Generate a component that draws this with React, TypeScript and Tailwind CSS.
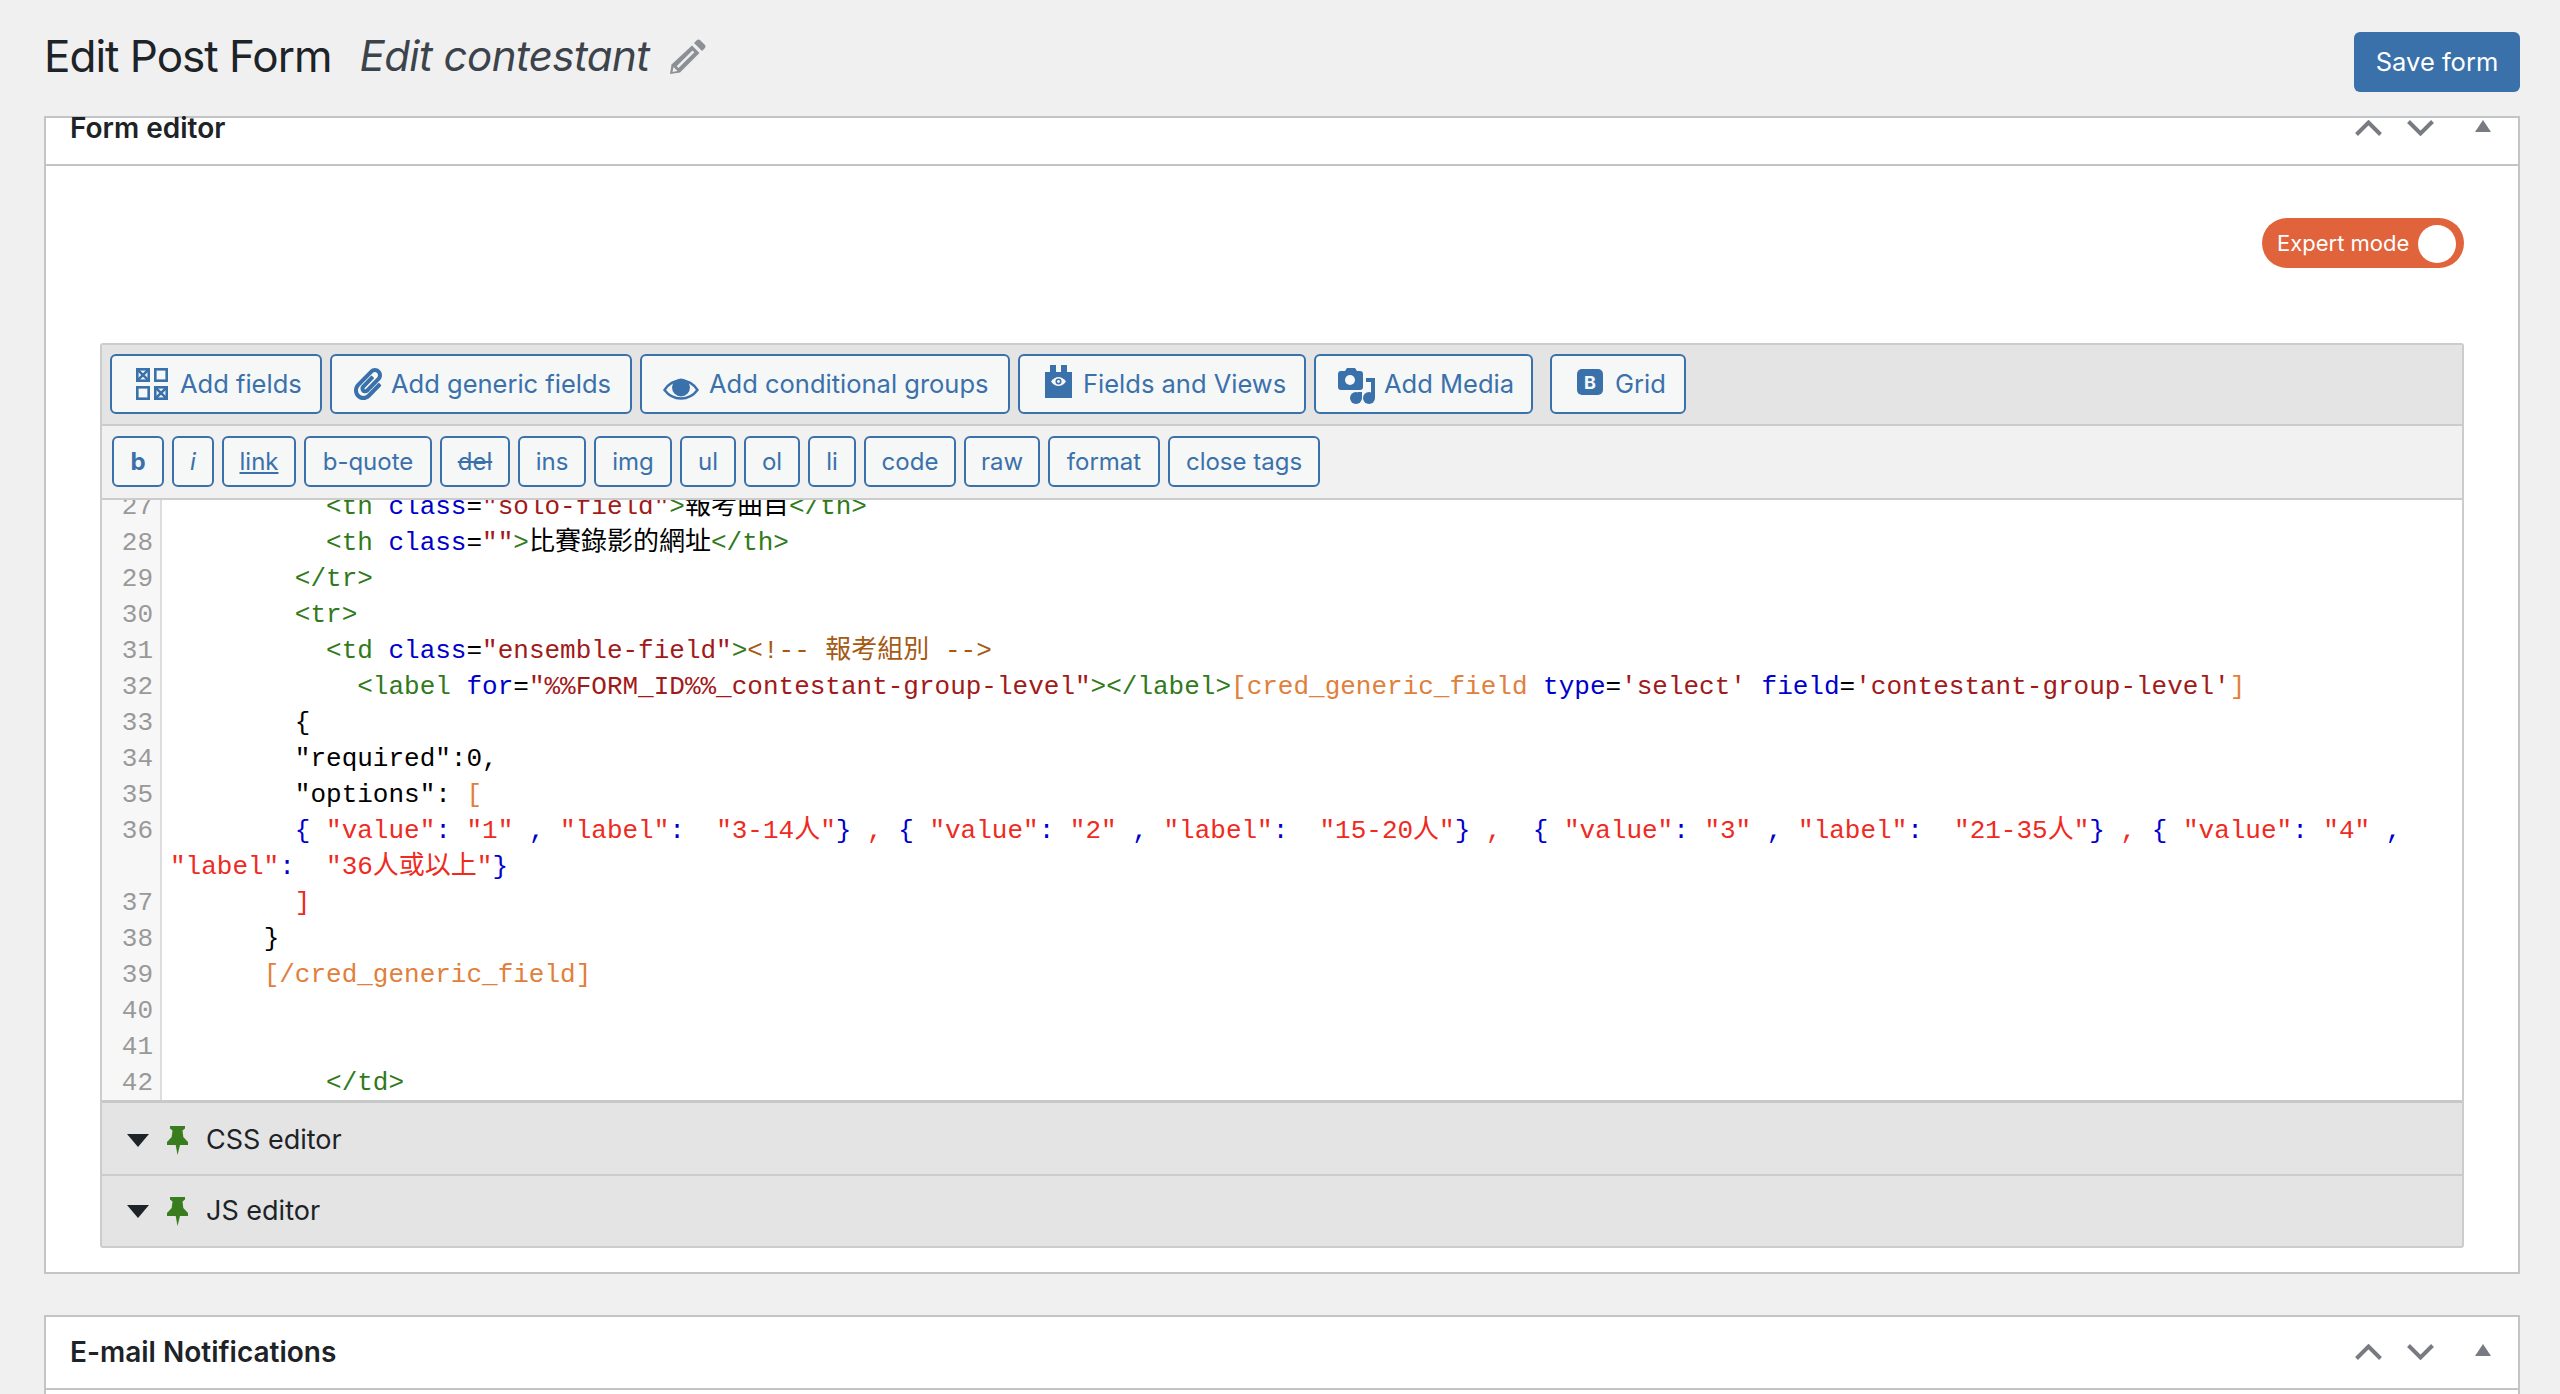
import type { ReactNode } from "react";
import { FaPaperclip } from "react-icons/fa";

const sans = "font-['Inter',sans-serif]";
const mono = "font-['Liberation_Mono','Noto_Sans_CJK_TC',monospace]";

// codemirror token colours
const tag = "text-[#317a1c]";
const attr = "text-[#0000cc]";
const str = "text-[#a11a1a]";
const eq = "text-black";
const cmt = "text-[#a55a14]";
const sc = "text-[#e0803c]";
const err = "text-[#ee2a22]";

type Part = [string, string];
type Line = { n?: number; parts: Part[] };

const sp = (count: number): Part => [eq, " ".repeat(count)];

const lines: Line[] = [
  {
    n: 27,
    parts: [sp(10), [tag, "<th"], [attr, " class"], [eq, "="], [str, '"solo-field"'], [tag, ">"], [eq, "報考曲目"], [tag, "</th>"]],
  },
  {
    n: 28,
    parts: [sp(10), [tag, "<th"], [attr, " class"], [eq, "="], [str, '""'], [tag, ">"], [eq, "比賽錄影的網址"], [tag, "</th>"]],
  },
  { n: 29, parts: [sp(8), [tag, "</tr>"]] },
  { n: 30, parts: [sp(8), [tag, "<tr>"]] },
  {
    n: 31,
    parts: [sp(10), [tag, "<td"], [attr, " class"], [eq, "="], [str, '"ensemble-field"'], [tag, ">"], [cmt, "<!-- 報考組別 -->"]],
  },
  {
    n: 32,
    parts: [
      sp(12),
      [tag, "<label"],
      [attr, " for"],
      [eq, "="],
      [str, '"%%FORM_ID%%_contestant-group-level"'],
      [tag, "></label>"],
      [sc, "[cred_generic_field"],
      [attr, " type"],
      [eq, "="],
      [str, "'select'"],
      [attr, " field"],
      [eq, "="],
      [str, "'contestant-group-level'"],
      [sc, "]"],
    ],
  },
  { n: 33, parts: [sp(8), [eq, "{"]] },
  { n: 34, parts: [sp(8), [eq, '"required":0,']] },
  { n: 35, parts: [sp(8), [eq, '"options": '], [sc, "["]] },
  {
    n: 36,
    parts: [
      sp(8),
      [attr, "{ "],
      [err, '"value"'],
      [attr, ": "],
      [err, '"1"'],
      [attr, " , "],
      [err, '"label"'],
      [attr, ":  "],
      [err, '"3-14人"'],
      [attr, "}"],
      [err, " , "],
      [attr, "{ "],
      [err, '"value"'],
      [attr, ": "],
      [err, '"2"'],
      [attr, " , "],
      [err, '"label"'],
      [attr, ":  "],
      [err, '"15-20人"'],
      [attr, "}"],
      [err, " ,  "],
      [attr, "{ "],
      [err, '"value"'],
      [attr, ": "],
      [err, '"3"'],
      [attr, " , "],
      [err, '"label"'],
      [attr, ":  "],
      [err, '"21-35人"'],
      [attr, "}"],
      [err, " , "],
      [attr, "{ "],
      [err, '"value"'],
      [attr, ": "],
      [err, '"4"'],
      [attr, " ,"],
    ],
  },
  { parts: [[err, '"label"'], [attr, ":  "], [err, '"36人或以上"'], [attr, "}"]] },
  { n: 37, parts: [sp(8), [err, "]"]] },
  { n: 38, parts: [sp(6), [eq, "}"]] },
  { n: 39, parts: [sp(6), [sc, "[/cred_generic_field]"]] },
  { n: 40, parts: [] },
  { n: 41, parts: [] },
  { n: 42, parts: [sp(10), [tag, "</td>"]] },
];

const formatButtons = [
  { label: "b", w: "w-[52px]", extra: "font-bold" },
  { label: "i", w: "w-[42px]", extra: "italic" },
  { label: "link", w: "w-[74px]", extra: "underline" },
  { label: "b-quote", w: "w-[128px]", extra: "" },
  { label: "del", w: "w-[70px]", extra: "line-through" },
  { label: "ins", w: "w-[68px]", extra: "" },
  { label: "img", w: "w-[78px]", extra: "" },
  { label: "ul", w: "w-[56px]", extra: "" },
  { label: "ol", w: "w-[56px]", extra: "" },
  { label: "li", w: "w-[48px]", extra: "" },
  { label: "code", w: "w-[92px]", extra: "" },
  { label: "raw", w: "w-[76px]", extra: "" },
  { label: "format", w: "w-[112px]", extra: "" },
  { label: "close tags", w: "w-[152px]", extra: "" },
];

function FieldsIcon() {
  return (
    <svg width="32" height="32" viewBox="0 0 32 32" fill="none" stroke="currentColor" strokeWidth="2.6">
      <rect x="1.3" y="1.3" width="11.4" height="11.4" />
      <path d="M1.3 1.3l11.4 11.4M12.7 1.3L1.3 12.7" />
      <rect x="19.3" y="1.3" width="11.4" height="11.4" />
      <rect x="1.3" y="19.3" width="11.4" height="11.4" />
      <rect x="19.3" y="19.3" width="11.4" height="11.4" />
      <path d="M19.3 19.3l11.4 11.4M30.7 19.3L19.3 30.7" />
    </svg>
  );
}

function EyeIcon() {
  return (
    <svg width="36" height="22" viewBox="0 0 36 22">
      <path d="M1.5 12C6 5 12 2.5 18 2.5S30 5 34.5 12C30 18 24 20.5 18 20.5S6 18 1.5 12z" fill="none" stroke="currentColor" strokeWidth="2.4" />
      <circle cx="18" cy="9.5" r="9" fill="currentColor" />
    </svg>
  );
}

function ViewsIcon() {
  return (
    <svg width="27" height="33" viewBox="0 0 27 33">
      <path d="M0 7h5V0h6v7h5V0h6v7h5v26H0z" fill="currentColor" />
      <path d="M6 16.500C8 13.500 11 12 13.500 12S19 13.500 21 16.500C19 19.500 16 21 13.500 21S8 19.500 6 16.500z" fill="#f6f7f7" />
      <circle cx="13.500" cy="16.500" r="3" fill="currentColor" />
      <circle cx="13.500" cy="16.500" r="1.400" fill="#f6f7f7" />
    </svg>
  );
}

function MediaIcon() {
  return (
    <svg width="37" height="36" viewBox="0 0 37 36">
      <path d="M3 3h4l2-3h8l2 3h3a3 3 0 0 1 3 3v13a3 3 0 0 1-3 3H3a3 3 0 0 1-3-3V6a3 3 0 0 1 3-3z" fill="currentColor" />
      <circle cx="12" cy="12" r="5" fill="#f6f7f7" />
      <path d="M28 10h9v20h-4V14h-5z" fill="currentColor" />
      <circle cx="31" cy="30" r="6" fill="currentColor" />
      <path d="M20 24h4v6h-4z" fill="currentColor" />
      <circle cx="18" cy="30" r="6" fill="currentColor" />
    </svg>
  );
}

function PencilIcon() {
  return (
    <svg width="36" height="35" viewBox="0 0 36 35" className="text-[#8c8f94]">
      <path d="M26.500 1.500a2.800 2.800 0 0 1 4 0l4 4a2.800 2.800 0 0 1 0 4l-2.500 2.500-8-8z" fill="currentColor" />
      <path d="M22 6.500l7.500 7.500L10 33.500 0 35l1.500-9.500z" fill="currentColor" />
      <path d="M22.500 11.500l1.800 1.800L8.500 29l-1.800-1.800z" fill="#f0f0f1" />
      <path d="M3.500 28l4 4-5 1z" fill="#f0f0f1" />
    </svg>
  );
}

function PinIcon() {
  return (
    <svg width="21" height="29" viewBox="0 0 21 29" className="shrink-0 text-[#3a7d1e]">
      <path d="M3 0h15v2.500l-2.500 2 .8 6.500 4.700 5v3h-8L10.500 29 8.700 19H0v-3l4.700-5 .8-6.500-2.500-2z" fill="currentColor" />
    </svg>
  );
}

function Caret() {
  return (
    <svg width="22" height="13" viewBox="0 0 22 13" className="shrink-0 text-[#1d2327]">
      <path d="M0 0h22L11 13z" fill="currentColor" />
    </svg>
  );
}

function HandleIcons() {
  return (
    <div className="flex items-center text-[#787c82]">
      <svg width="27" height="16" viewBox="0 0 27 16" fill="none" stroke="currentColor" strokeWidth="4">
        <path d="M1.500 14.500l12-12 12 12" />
      </svg>
      <svg width="27" height="16" viewBox="0 0 27 16" fill="none" stroke="currentColor" strokeWidth="4" className="ml-[25px]">
        <path d="M1.500 1.500l12 12 12-12" />
      </svg>
      <svg width="16" height="12" viewBox="0 0 16 12" className="ml-[41px] mr-[27px] -translate-y-[2px]">
        <path d="M8 0l8 12H0z" fill="currentColor" />
      </svg>
    </div>
  );
}

function ToolButton({ w, pl, children }: { w: string; pl: string; children: ReactNode }) {
  return (
    <button className={`flex h-[60px] items-center rounded-[6px] border-2 border-[#3a71ab] bg-[#f6f7f7] text-[25.5px] whitespace-nowrap text-[#3a71ab] ${w} ${pl}`}>
      {children}
    </button>
  );
}

function SubEditor({ title, box }: { title: string; box: string }) {
  return (
    <div className={`flex items-center bg-[#e4e4e4] pl-[25px] text-[27px] text-[#1d2327] ${box}`}>
      <Caret />
      <span className="ml-[18px]">
        <PinIcon />
      </span>
      <span className="ml-[18px]">{title}</span>
    </div>
  );
}

export default function App() {
  return (
    <div className={`h-[1394px] overflow-hidden bg-[#f0f0f1] pr-[40px] pl-[44px] ${sans}`}>
      <div className="flex h-[116px] items-start justify-between">
        <div className="flex items-center pt-[29px]">
          <h1 className="text-[44px] leading-[54px] tracking-[-1px] text-[#1d2327]">Edit Post Form</h1>
          <span className="ml-[28px] text-[42px] leading-[54px] tracking-[-0.55px] text-[#3c434a] italic">Edit contestant</span>
          <span className="ml-[20px]">
            <PencilIcon />
          </span>
        </div>
        <button className="mt-[32px] h-[60px] w-[166px] rounded-[6px] bg-[#3a71ab] text-[25.5px] text-white">Save form</button>
      </div>

      <div className="border-2 border-[#c3c4c7] bg-white">
        <div className="flex h-[46px] items-start justify-between pt-[1px] pl-[24px]">
          <h2 className="text-[28px] leading-[18px] font-semibold text-[#1d2327]">Form editor</h2>
          <div className="pt-[1px]">
            <HandleIcons />
          </div>
        </div>
        <div className="border-t-2 border-[#c3c4c7] px-[54px] pb-[24px]">
          <div className="flex justify-end pt-[52px] pb-[75px]">
            <div className="flex h-[50px] w-[202px] items-center rounded-full bg-[#e0633b] pt-[1px] pl-[15px] text-[22px] whitespace-nowrap text-white">
              Expert mode
              <span className="mr-[8px] ml-auto h-[38px] w-[38px] rounded-full bg-white" />
            </div>
          </div>

          <div className="rounded-[3px] border-2 border-[#cccccc]">
            <div className="flex gap-2 border-b-2 border-[#cccccc] bg-[#e4e4e4] px-[8px] pt-[9px] pb-[10px]">
              <ToolButton w="w-[212px]" pl="pl-[24px]">
                <FieldsIcon />
                <span className="ml-[12px]">Add fields</span>
              </ToolButton>
              <ToolButton w="w-[302px]" pl="pl-[20px]">
                <FaPaperclip size={32} />
                <span className="ml-[7px]">Add generic fields</span>
              </ToolButton>
              <ToolButton w="w-[370px]" pl="pl-[21px]">
                <span className="mt-[9px]">
                  <EyeIcon />
                </span>
                <span className="ml-[10px]">Add conditional groups</span>
              </ToolButton>
              <ToolButton w="w-[288px]" pl="pl-[25px]">
                <span className="-mt-[6px]">
                  <ViewsIcon />
                </span>
                <span className="ml-[11px]">Fields and Views</span>
              </ToolButton>
              <ToolButton w="w-[219px]" pl="pl-[22px]">
                <span className="mt-[4px]">
                  <MediaIcon />
                </span>
                <span className="ml-[9px]">Add Media</span>
              </ToolButton>
              <div className="ml-[9px]">
                <ToolButton w="w-[136px]" pl="pl-[25px]">
                  <span className="-mt-[4px] flex h-[26px] w-[26px] items-center justify-center rounded-[5px] bg-[#3a71ab] text-[18px] font-bold text-[#f6f7f7]">B</span>
                  <span className="ml-[12px]">Grid</span>
                </ToolButton>
              </div>
            </div>

            <div className="flex gap-2 border-b-2 border-[#cccccc] bg-[#f1f1f1] px-[10px] pt-[10px] pb-[11px]">
              {formatButtons.map((b) => (
                <button
                  key={b.label}
                  className={`h-[51px] rounded-[6px] border-2 border-[#3a71ab] bg-[#f6f7f7] text-[24px] whitespace-nowrap text-[#3a71ab] ${b.w} ${b.extra}`}
                >
                  {b.label}
                </button>
              ))}
            </div>

            <div className={`h-[600px] overflow-hidden bg-white text-[26px] ${mono}`}>
              <div className="-mt-[11px]">
                {lines.map((line, i) => (
                  <div key={i} className="flex h-[36px] leading-[36px]">
                    <div className="w-[60px] shrink-0 border-r-2 border-[#dddddd] bg-[#f7f7f7] pr-[7px] text-right text-[#999999]">{line.n}</div>
                    <div className="pl-[8px] whitespace-pre">
                      {line.parts.map((part, j) => (
                        <span key={j} className={part[0]}>
                          {part[1]}
                        </span>
                      ))}
                    </div>
                  </div>
                ))}
              </div>
            </div>

            <SubEditor title="CSS editor" box="h-[74px] border-t-[3px] border-[#c8c8c8] pt-[3px]" />
            <SubEditor title="JS editor" box="h-[72px] border-t-2 border-[#cccccc] pt-[1px]" />
          </div>
        </div>
      </div>

      <div className="mt-[41px] border-2 border-[#c3c4c7] bg-white">
        <div className="flex h-[71px] items-center justify-between pb-[1px] pl-[24px]">
          <h2 className="text-[28px] font-semibold text-[#1d2327]">E-mail Notifications</h2>
          <HandleIcons />
        </div>
        <div className="h-[40px] border-t-2 border-[#c3c4c7]" />
      </div>
    </div>
  );
}
